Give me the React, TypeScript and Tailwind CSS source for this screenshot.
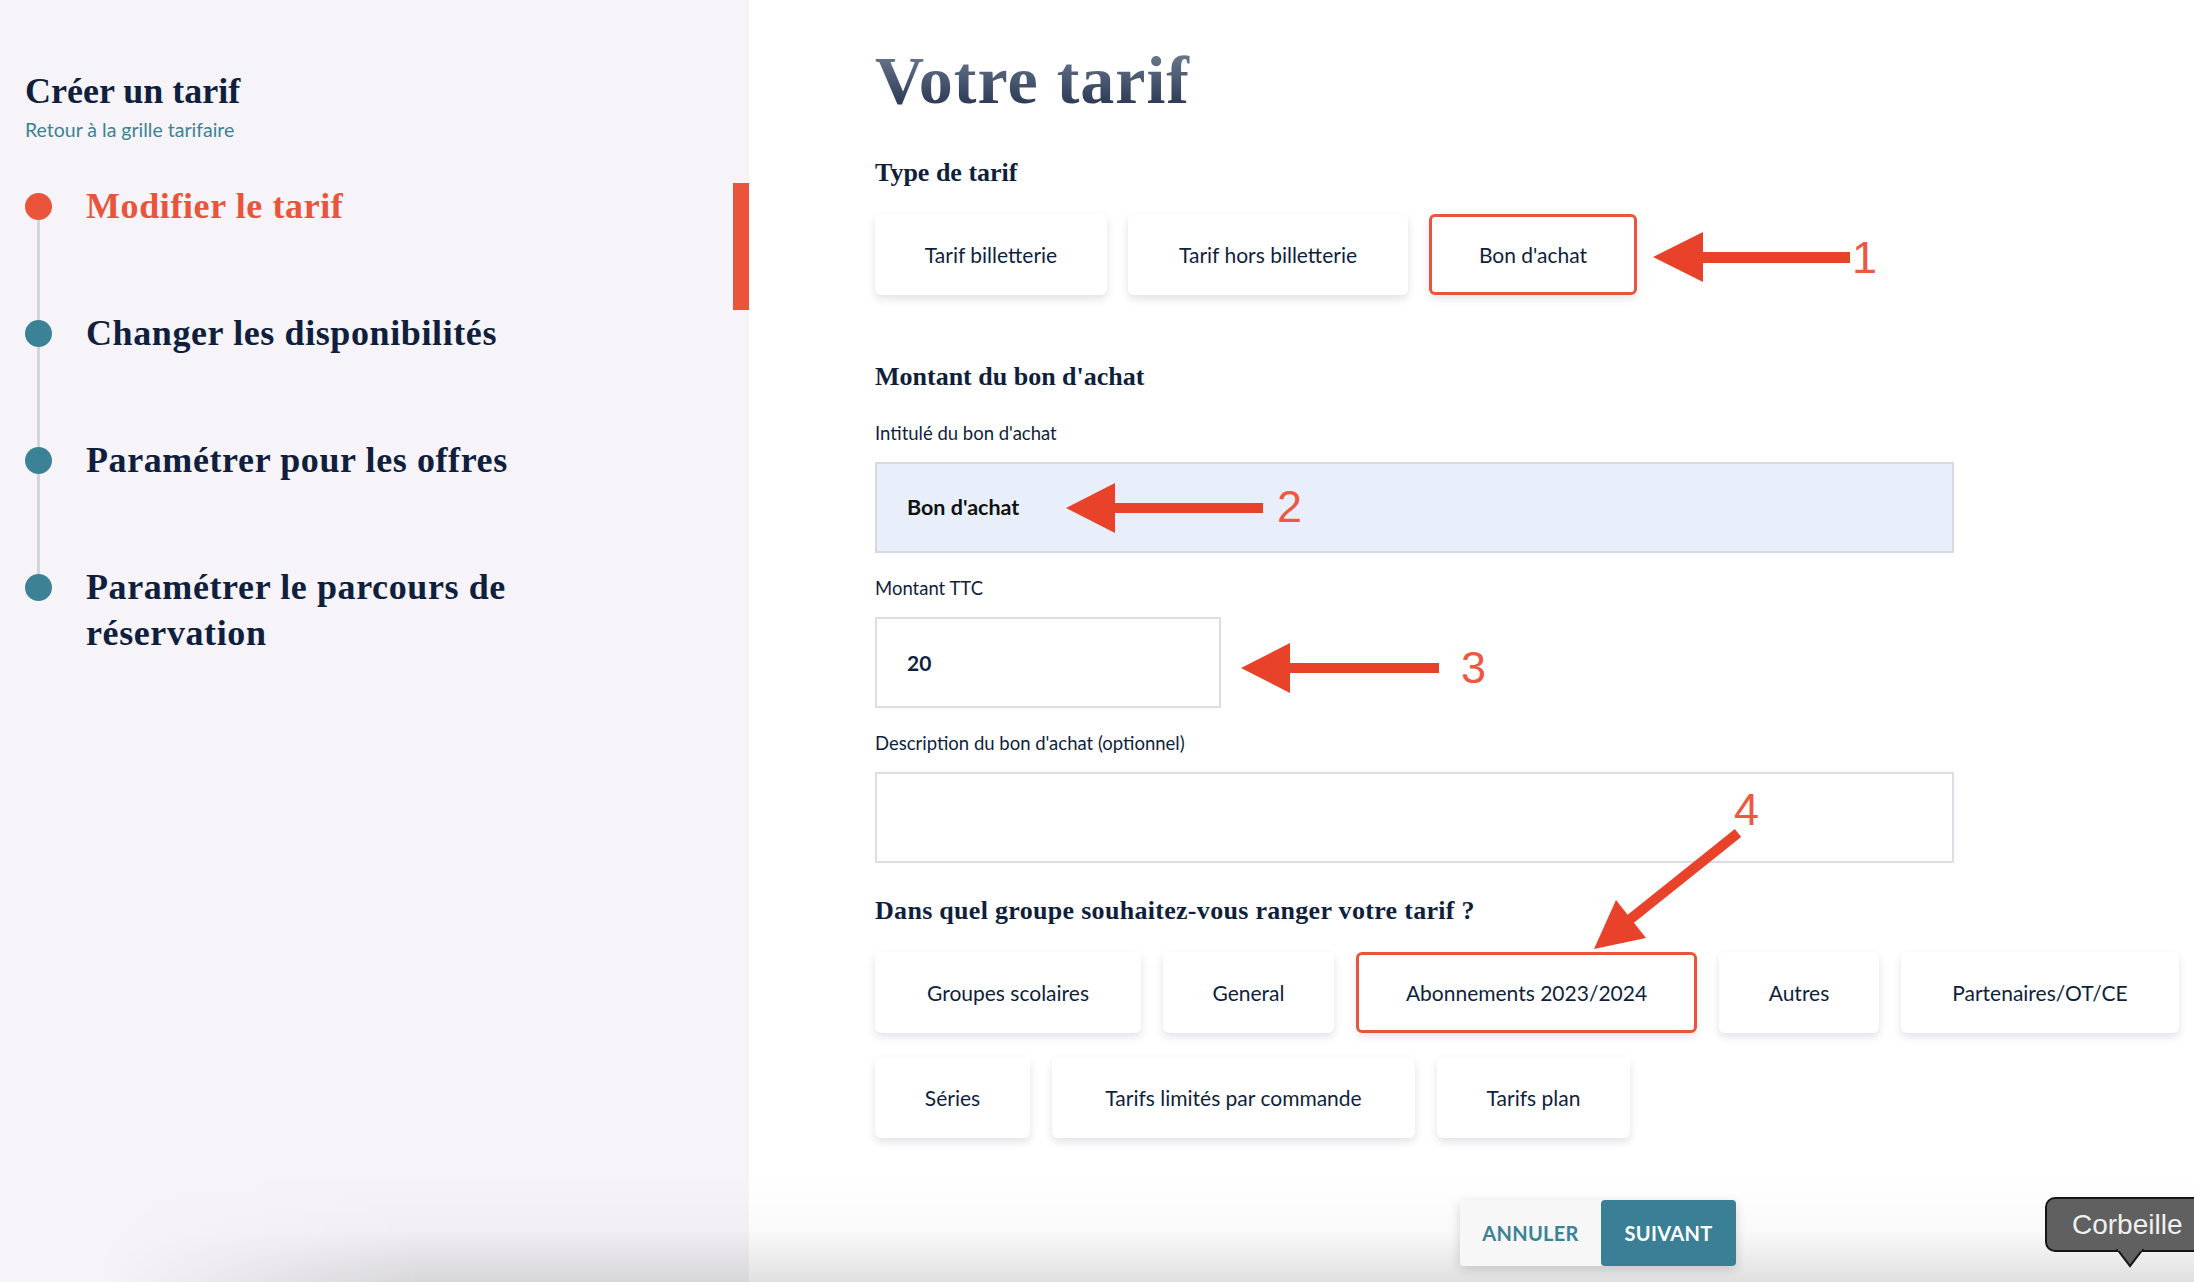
import React from "react";

const NAVY = "text-[#0f1f3d]";

function Choice({ label, w, sel }: { label: string; w: string; sel?: boolean }) {
  return (
    <div
      className={
        sel
          ? `flex h-[81px] items-center justify-center rounded-md border-[3px] border-[#e9543b] bg-white text-[21px] text-[#0f1f3d] shadow-[0_4px_8px_rgba(15,31,61,0.10)] ${w}`
          : `flex h-[81px] items-center justify-center rounded-md bg-white text-[21px] text-[#0f1f3d] shadow-[0_4px_8px_rgba(15,31,61,0.13)] ${w}`
      }
    >
      {label}
    </div>
  );
}

function Step({
  label,
  active,
  first,
  last,
}: {
  label: string;
  active?: boolean;
  first?: boolean;
  last?: boolean;
}) {
  return (
    <div
      className={
        active
          ? "flex h-[127px] border-r-[16px] border-[#e9543b] pl-[25px]"
          : "flex h-[127px] pl-[25px]"
      }
    >
      <div className="flex w-[27px] flex-col items-center">
        <div className={first ? "h-[10px] w-[3px]" : "h-[10px] w-[3px] bg-[#d2d6dc]"} />
        <div
          className={
            active
              ? "size-[27px] shrink-0 rounded-full bg-[#e9543b]"
              : "size-[27px] shrink-0 rounded-full bg-[#3b8296]"
          }
        />
        {!last && <div className="w-[3px] flex-1 bg-[#d2d6dc]" />}
      </div>
      <div
        className={
          active
            ? "ml-[34px] w-[460px] font-['Liberation_Serif',serif] text-[36px] font-bold leading-[46px] tracking-[0.6px] text-[#e9543b]"
            : "ml-[34px] w-[460px] font-['Liberation_Serif',serif] text-[36px] font-bold leading-[46px] tracking-[0.6px] text-[#0f1f3d]"
        }
      >
        {label}
      </div>
    </div>
  );
}

export default function App() {
  return (
    <div className="relative flex h-[1282px] w-[2194px] overflow-hidden bg-white font-['Lato',sans-serif]">
      {/* Sidebar */}
      <aside className="w-[749px] shrink-0 bg-[#f6f4f8] pt-[69px]">
        <div className="pl-[25px]">
          <h1 className={`font-['Liberation_Serif',serif] text-[36px] font-bold leading-[44px] ${NAVY}`}>
            Créer un tarif
          </h1>
          <div className="mt-[5px] text-[19.5px] leading-[24px] text-[#3b8296]">
            Retour à la grille tarifaire
          </div>
        </div>
        <div className="mt-[41px]">
          <Step label="Modifier le tarif" active first />
          <Step label="Changer les disponibilités" />
          <Step label="Paramétrer pour les offres" />
          <Step label="Paramétrer le parcours de réservation" last />
        </div>
      </aside>

      {/* Main */}
      <main className="flex-1 pl-[126px] pt-[40px]">
        <h2 className="w-fit bg-linear-to-b from-[#7d8a9c] to-[#1b2946] bg-clip-text font-['Liberation_Serif',serif] text-[68px] font-bold leading-[80px] tracking-[1px] text-transparent">
          Votre tarif
        </h2>

        <h3 className={`mt-[37px] font-['Liberation_Serif',serif] text-[26px] font-bold leading-[32px] ${NAVY}`}>
          Type de tarif
        </h3>
        <div className="mt-[25px] flex gap-[21px]">
          <Choice label="Tarif billetterie" w="w-[232px]" />
          <Choice label="Tarif hors billetterie" w="w-[280px]" />
          <Choice label="Bon d'achat" w="w-[208px]" sel />
        </div>

        <h3 className={`mt-[66px] font-['Liberation_Serif',serif] text-[26px] font-bold leading-[32px] ${NAVY}`}>
          Montant du bon d'achat
        </h3>

        <div className={`mt-[29px] text-[18.5px] leading-[22px] ${NAVY}`}>Intitulé du bon d'achat</div>
        <div className="mt-[18px] flex h-[91px] w-[1079px] items-center border-2 border-[#d6d9df] bg-[#e8effb] pl-[30px] text-[21.5px] font-bold text-[#111111]">
          Bon d'achat
        </div>

        <div className={`mt-[24px] text-[18.5px] leading-[22px] ${NAVY}`}>Montant TTC</div>
        <div className="mt-[18px] flex h-[91px] w-[346px] items-center border-2 border-[#dcdee3] bg-white pl-[30px] text-[21px] font-bold text-[#0f1f3d]">
          20
        </div>

        <div className={`mt-[24px] text-[18.5px] leading-[22px] ${NAVY}`}>
          Description du bon d'achat (optionnel)
        </div>
        <div className="mt-[18px] h-[91px] w-[1079px] border-2 border-[#dcdee3] bg-white" />

        <h3 className={`mt-[32px] font-['Liberation_Serif',serif] text-[26px] font-bold leading-[32px] tracking-[0.3px] ${NAVY}`}>
          Dans quel groupe souhaitez-vous ranger votre tarif ?
        </h3>
        <div className="mt-[25px] flex flex-wrap gap-x-[22px] gap-y-[24px]">
          <Choice label="Groupes scolaires" w="w-[266px]" />
          <Choice label="General" w="w-[171px]" />
          <Choice label="Abonnements 2023/2024" w="w-[341px]" sel />
          <Choice label="Autres" w="w-[160px]" />
          <Choice label="Partenaires/OT/CE" w="w-[278px]" />
          <Choice label="Séries" w="w-[155px]" />
          <Choice label="Tarifs limités par commande" w="w-[363px]" />
          <Choice label="Tarifs plan" w="w-[193px]" />
        </div>

        <div className="relative z-20 ml-[585px] mt-[62px] flex w-fit rounded-[4px] shadow-[0_3px_12px_rgba(0,0,0,0.16)]">
          <div className="flex h-[66px] w-[141px] items-center justify-center rounded-l-[4px] bg-[#f7f7f7] text-[20px] font-bold tracking-[0.3px] text-[#3b8296]">
            ANNULER
          </div>
          <div className="flex h-[66px] w-[135px] items-center justify-center rounded-[4px] bg-[#3a7f95] text-[20px] font-bold tracking-[0.3px] text-white">
            SUIVANT
          </div>
        </div>
      </main>

      {/* bottom shade */}
      <div className="pointer-events-none absolute bottom-0 left-0 right-0 z-10 h-[105px] bg-linear-to-b from-transparent via-[rgba(0,0,0,0.02)] to-[rgba(0,0,0,0.12)] [mask-image:linear-gradient(to_right,transparent_100px,black_420px)]" />

      {/* Annotation arrows */}
      <svg
        className="pointer-events-none absolute left-0 top-0 z-30"
        width="2194"
        height="1282"
        viewBox="0 0 2194 1282"
      >
        <g fill="#e8432a">
          <polygon points="1653,257 1703,232 1703,282" />
          <rect x="1702" y="252" width="148" height="11" />
          <polygon points="1066,508 1115,483 1115,533" />
          <rect x="1114" y="503" width="149" height="10" />
          <polygon points="1241,668 1290,643 1290,693" />
          <rect x="1289" y="663" width="150" height="10" />
          <polygon points="1594,949 1616,900 1646,938" />
        </g>
        <line x1="1738" y1="833" x2="1628" y2="921" stroke="#e8432a" strokeWidth="10" />
      </svg>
      <span className="absolute left-[1852px] top-[232px] z-30 font-['Liberation_Sans',sans-serif] text-[45px] leading-[52px] text-[#ee5842]">1</span>
      <span className="absolute left-[1277px] top-[481px] z-30 font-['Liberation_Sans',sans-serif] text-[45px] leading-[52px] text-[#ee5842]">2</span>
      <span className="absolute left-[1461px] top-[642px] z-30 font-['Liberation_Sans',sans-serif] text-[45px] leading-[52px] text-[#ee5842]">3</span>
      <span className="absolute left-[1734px] top-[784px] z-30 font-['Liberation_Sans',sans-serif] text-[45px] leading-[52px] text-[#ee5842]">4</span>

      {/* Corbeille tooltip */}
      <div className="absolute left-[2045px] top-[1197px] z-40">
        <div className="relative flex h-[55px] w-[170px] items-center rounded-[10px] border-2 border-[#161616] bg-[#606060] pl-[25px] font-['Liberation_Sans',sans-serif] text-[28px] text-[#f0f0f0]">
          Corbeille
        </div>
        <svg className="absolute left-[70px] top-[52px]" width="30" height="20" viewBox="0 0 30 20">
          <polygon points="2,0 28,0 15,17" fill="#606060" stroke="#161616" strokeWidth="2" />
          <rect x="3" y="0" width="24" height="2" fill="#606060" />
        </svg>
      </div>
    </div>
  );
}
